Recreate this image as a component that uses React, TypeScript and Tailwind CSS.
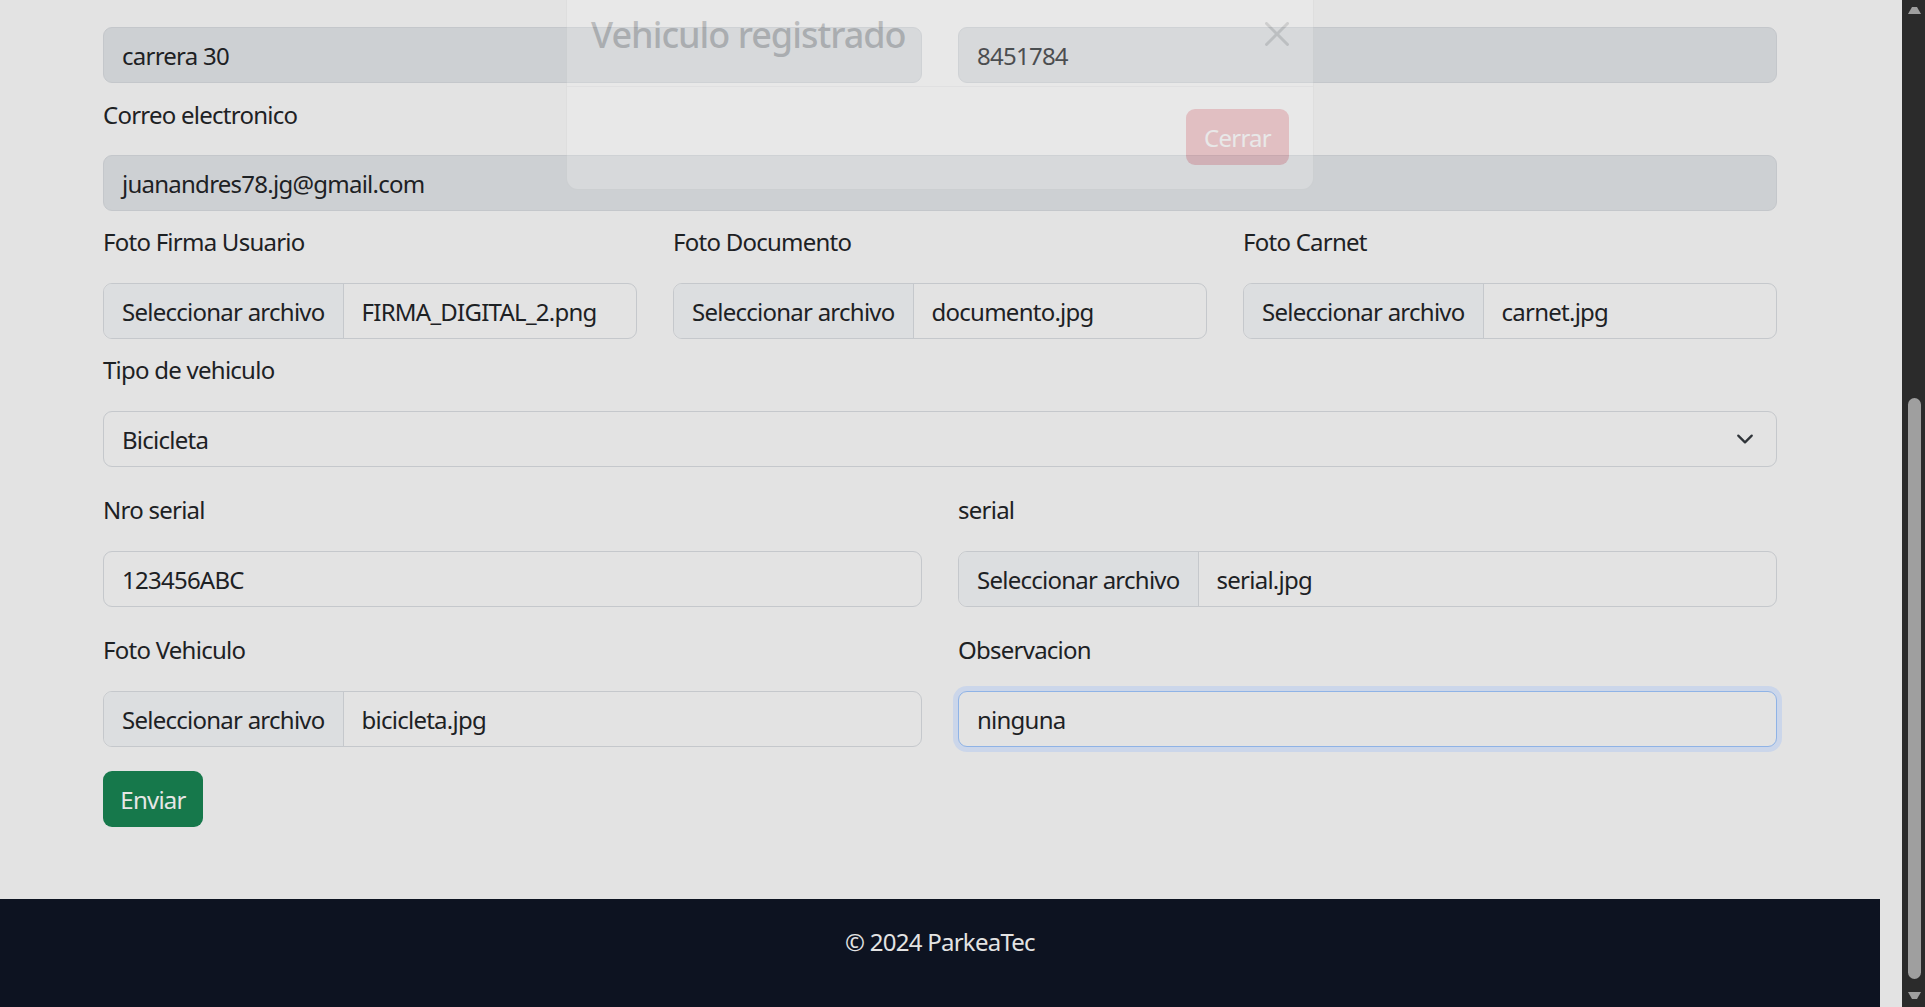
import { ReactNode } from 'react';

function Label({ children, className = '' }: { children: ReactNode; className?: string }) {
  return <div className={`h-[36px] leading-[38px] ${className}`}>{children}</div>;
}

function TextBox({ value, disabled, focused }: { value: string; disabled?: boolean; focused?: boolean }) {
  return (
    <div
      className={`h-[56px] flex items-center pt-[2px] px-[18px] rounded-[9px] border ${
        disabled
          ? 'bg-[#cdd0d3] border-[#c4c7cb]'
          : focused
          ? 'bg-[#e3e3e3] border-[#8fb3e6] shadow-[0_0_0_5px_#cbd6ea]'
          : 'bg-[#e3e3e3] border-[#c5c8cc]'
      }`}
    >
      {value}
    </div>
  );
}

function FileBox({ name }: { name: string }) {
  return (
    <div className="h-[56px] flex rounded-[9px] border border-[#c5c8cc] overflow-hidden bg-[#e3e3e3]">
      <div className="flex items-center pt-[2px] px-[18px] bg-[#dcdee0] border-r border-[#c5c8cc]">Seleccionar archivo</div>
      <div className="flex items-center pt-[2px] px-[18px]">{name}</div>
    </div>
  );
}

function Modal() {
  return (
    <div className="absolute left-[566px] top-[-19px] w-[748px] opacity-20 bg-white border border-black/20 rounded-[12px]">
      <div className="flex items-center justify-between p-[24px] border-b border-[#d6d9dc]">
        <div className="text-[36px] leading-[54px] pt-[2px] font-medium tracking-[-1px] text-[#212529]">Vehiculo registrado</div>
        <svg width="24" height="24" viewBox="0 0 16 16" className="opacity-50">
          <path
            fill="#000"
            d="M.293.293a1 1 0 0 1 1.414 0L8 6.586 14.293.293a1 1 0 1 1 1.414 1.414L9.414 8l6.293 6.293a1 1 0 0 1-1.414 1.414L8 9.414l-6.293 6.293a1 1 0 0 1-1.414-1.414L6.586 8 .293 1.707a1 1 0 0 1 0-1.414z"
          />
        </svg>
      </div>
      <div className="flex justify-end px-[24px] pt-[22px] pb-[24px]">
        <div className="h-[56px] flex items-center pt-[1px] px-[18px] rounded-[9px] bg-[#dc3545] text-white">Cerrar</div>
      </div>
    </div>
  );
}

function Scrollbar() {
  return (
    <div className="w-[23px] h-full bg-[#2b2b2b] flex flex-col items-center">
      <svg width="15" height="12" viewBox="0 0 15 12" className="mt-[6px] ml-[2px]">
        <path d="M5 1 H10 L14 8 H1 Z" fill="#9f9f9f" />
      </svg>
      <div className="mt-[380px] ml-[2px] w-[13px] h-[581px] rounded-full bg-[#9f9f9f]" />
      <svg width="15" height="12" viewBox="0 0 15 12" className="mt-[10px] ml-[2px]">
        <path d="M1 3 H14 L10 10 H5 Z" fill="#9f9f9f" />
      </svg>
    </div>
  );
}

export default function App() {
  return (
    <div className="relative w-[1925px] h-[1007px] overflow-hidden flex bg-[#e3e3e3] text-[24px] text-[#1d2124] tracking-[-0.75px] font-['Noto_Sans',sans-serif]">
      <div className="w-[1902px] flex flex-col">
        <main className="h-[899px] w-[1880px] shrink-0">
          <div className="w-[1674px] ml-[103px] pt-[27px]">
            <div className="grid grid-cols-2 gap-x-[36px]">
              <TextBox value="carrera 30" disabled />
              <TextBox value="8451784" disabled />
            </div>
            <Label className="mt-[13px]">Correo electronico</Label>
            <div className="mt-[23px]">
              <TextBox value="juanandres78.jg@gmail.com" disabled />
            </div>

            <div className="grid grid-cols-3 gap-x-[36px] mt-[12px]">
              <div>
                <Label>Foto Firma Usuario</Label>
                <div className="mt-[24px]">
                  <FileBox name="FIRMA_DIGITAL_2.png" />
                </div>
              </div>
              <div>
                <Label>Foto Documento</Label>
                <div className="mt-[24px]">
                  <FileBox name="documento.jpg" />
                </div>
              </div>
              <div>
                <Label>Foto Carnet</Label>
                <div className="mt-[24px]">
                  <FileBox name="carnet.jpg" />
                </div>
              </div>
            </div>

            <Label className="mt-[12px]">Tipo de vehiculo</Label>
            <div className="mt-[24px] h-[56px] flex items-center justify-between pl-[18px] pr-[22px] rounded-[9px] border border-[#c5c8cc]">
              <span className="pt-[2px]">Bicicleta</span>
              <svg width="18" height="18" viewBox="0 0 16 16">
                <path d="m2 5 6 6 6-6" fill="none" stroke="#2f3439" strokeWidth="2" strokeLinecap="round" strokeLinejoin="round" />
              </svg>
            </div>

            <div className="grid grid-cols-2 gap-x-[36px] mt-[24px]">
              <div>
                <Label>Nro serial</Label>
                <div className="mt-[24px]">
                  <TextBox value="123456ABC" />
                </div>
              </div>
              <div>
                <Label>serial</Label>
                <div className="mt-[24px]">
                  <FileBox name="serial.jpg" />
                </div>
              </div>
            </div>

            <div className="grid grid-cols-2 gap-x-[36px] mt-[24px]">
              <div>
                <Label>Foto Vehiculo</Label>
                <div className="mt-[24px]">
                  <FileBox name="bicicleta.jpg" />
                </div>
              </div>
              <div>
                <Label>Observacion</Label>
                <div className="mt-[24px]">
                  <TextBox value="ninguna" focused />
                </div>
              </div>
            </div>

            <div className="mt-[24px] h-[56px] w-[100px] flex items-center justify-center pt-[2px] rounded-[9px] bg-[#16784b] text-[#e6e6e6]">
              Enviar
            </div>
          </div>
        </main>
        <footer className="flex-1 w-[1880px] bg-[#0d1321] text-[#e3e3e3] pt-[25px] text-center">
          <p className="leading-[36px]">© 2024 ParkeaTec</p>
        </footer>
      </div>
      <Scrollbar />
      <Modal />
    </div>
  );
}
